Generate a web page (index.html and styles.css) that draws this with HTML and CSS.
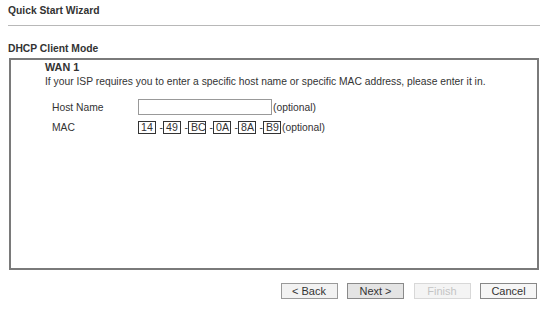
FILE: index.html
```html
<!DOCTYPE html>
<html>
<head>
<meta charset="utf-8">
<link rel="stylesheet" href="styles.css">
</head>
<body>
<div class="page">
  <div class="title">Quick Start Wizard</div>
  <div class="divider"></div>
  <div class="section">DHCP Client Mode</div>
  <div class="panel">
    <div class="wan">WAN 1</div>
    <div class="desc">If your ISP requires you to enter a specific host name or specific MAC address, please enter it in.</div>
    <div class="form">
      <div class="row">
        <span class="label">Host Name</span>
        <span class="host"></span><span class="opt">(optional)</span>
      </div>
      <div class="row">
        <span class="label">MAC</span>
        <span class="mac">14</span><span class="dash">-</span><span class="mac">49</span><span class="dash">-</span><span class="mac">BC</span><span class="dash">-</span><span class="mac">0A</span><span class="dash">-</span><span class="mac">8A</span><span class="dash">-</span><span class="mac">B9</span><span class="opt">(optional)</span>
      </div>
    </div>
  </div>
  <div class="buttons">
    <span class="btn">&lt; Back</span>
    <span class="btn next">Next &gt;</span>
    <span class="btn disabled">Finish</span>
    <span class="btn cancel">Cancel</span>
  </div>
</div>
</body>
</html>
```
FILE: styles.css
```css
* { box-sizing: border-box; }
html, body { margin: 0; padding: 0; background: #fff; }
body { font-family: "Liberation Sans", Arial, sans-serif; font-size: 10.3px; color: #222; }
.page { padding: 3px 10px 0 8px; }
.title { font-weight: bold; height: 15px; line-height: 15px; color: #333; }
.divider { margin-top: 7px; height: 1px; background: #b8b8b8; width: 532px; }
.section { margin-top: 16px; font-weight: bold; line-height: 14px; color: #333; }
.panel {
  margin-top: 2px;
  margin-left: 1px;
  width: 530px;
  height: 212px;
  border: 2px solid #7a7a7a;
  padding: 1px 0 0 34px;
}
.wan { font-weight: bold; line-height: 13px; color: #333; font-size: 10.8px; }
.desc { line-height: 14px; margin-top: 1px; color: #333; }
.form { margin-top: 8px; padding-left: 7px; }
.row { display: flex; align-items: center; height: 20px; }
.label { width: 86px; color: #333; }
.host { width: 134px; height: 16px; border: 1px solid #999; }
.opt { margin-left: 1px; color: #333; }
.mac {
  display: inline-block;
  width: 18px;
  height: 13px;
  line-height: 11px;
  border: 1px solid #333;
  padding: 0 0 0 2px;
  color: #333;
  font-size: 10.6px;
}
.dash { width: 7px; text-align: right; color: #333; }
.buttons { display: flex; justify-content: flex-end; gap: 9.5px; margin-top: 13px; padding-right: 3px; }
.btn {
  width: 57px;
  height: 16px;
  line-height: 14px;
  text-align: center;
  border: 1px solid #9a9a9a;
  background: #f2f2f2;
  color: #333;
  font-size: 11px;
}
.next { background: #e4e4e4; border-color: #8a8a8a; }
.disabled { color: #c4c4c4; border-color: #d8d8d8; background: #f4f4f4; }
.cancel { border-color: #888; background: #f6f6f6; }
```
